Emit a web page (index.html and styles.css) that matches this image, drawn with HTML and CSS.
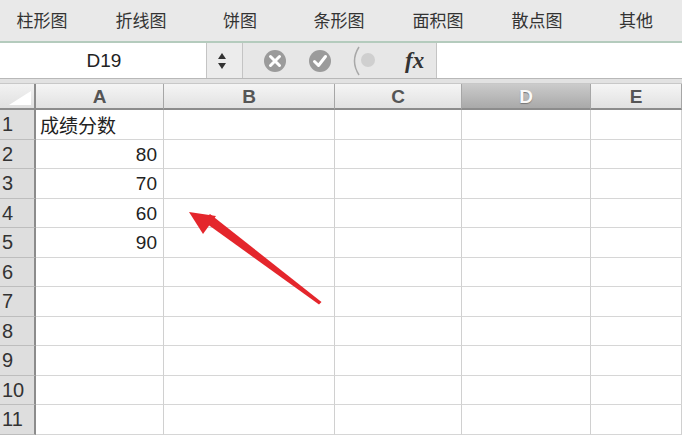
FILE: index.html
```html
<!DOCTYPE html>
<html>
<head>
    <title>成绩分数</title>
    <link rel="stylesheet" href="styles.css">
</head>
<body>
    <div class="ribbon">
        <span class="ribbon-item">柱形图</span>
        <span class="ribbon-item">折线图</span>
        <span class="ribbon-item">饼图</span>
        <span class="ribbon-item">条形图</span>
        <span class="ribbon-item">面积图</span>
        <span class="ribbon-item">散点图</span>
        <span class="ribbon-item">其他</span>
    </div>

    <div class="formula-bar">
        <div class="name-box">D19</div>
        <div class="spinner">
            <svg width="10" height="18" viewBox="0 0 10 18">
                <path d="M5 1 L9 7 L1 7 Z" fill="#333"/>
                <path d="M5 17 L9 11 L1 11 Z" fill="#333"/>
            </svg>
        </div>
        <div class="tools">
            <svg class="tool-icon" width="24" height="24" viewBox="0 0 24 24">
                <circle cx="12" cy="12" r="11" fill="#9b9b9b"/>
                <path d="M7.5 7.5 L16.5 16.5 M16.5 7.5 L7.5 16.5" stroke="#fff" stroke-width="3" stroke-linecap="round"/>
            </svg>
            <svg class="tool-icon" width="24" height="24" viewBox="0 0 24 24">
                <circle cx="12" cy="12" r="11" fill="#9b9b9b"/>
                <path d="M6.5 12.5 L10.5 16.5 L17.5 7.5" stroke="#fff" stroke-width="3" fill="none" stroke-linecap="round" stroke-linejoin="round"/>
            </svg>
            <svg class="paren" width="30" height="34" viewBox="0 0 30 34">
                <path d="M10 3 Q1 17 10 31" stroke="#a8a8a8" stroke-width="1.5" fill="none"/>
                <circle cx="19" cy="16" r="7" fill="#cfcfcf"/>
            </svg>
            <span class="fx">fx</span>
        </div>
        <div class="formula-input"></div>
    </div>

    <div class="band"></div>

    <div class="sheet">
        <div class="grid">
            <div class="corner"></div>
            <div class="col-head">A</div>
            <div class="col-head">B</div>
            <div class="col-head">C</div>
            <div class="col-head selected">D</div>
            <div class="col-head">E</div>

            <div class="row-head">1</div>
            <div class="cell text">成绩分数</div><div class="cell"></div><div class="cell"></div><div class="cell"></div><div class="cell"></div>
            <div class="row-head">2</div>
            <div class="cell num">80</div><div class="cell"></div><div class="cell"></div><div class="cell"></div><div class="cell"></div>
            <div class="row-head">3</div>
            <div class="cell num">70</div><div class="cell"></div><div class="cell"></div><div class="cell"></div><div class="cell"></div>
            <div class="row-head">4</div>
            <div class="cell num">60</div><div class="cell"></div><div class="cell"></div><div class="cell"></div><div class="cell"></div>
            <div class="row-head">5</div>
            <div class="cell num">90</div><div class="cell"></div><div class="cell"></div><div class="cell"></div><div class="cell"></div>
            <div class="row-head">6</div>
            <div class="cell"></div><div class="cell"></div><div class="cell"></div><div class="cell"></div><div class="cell"></div>
            <div class="row-head">7</div>
            <div class="cell"></div><div class="cell"></div><div class="cell"></div><div class="cell"></div><div class="cell"></div>
            <div class="row-head">8</div>
            <div class="cell"></div><div class="cell"></div><div class="cell"></div><div class="cell"></div><div class="cell"></div>
            <div class="row-head">9</div>
            <div class="cell"></div><div class="cell"></div><div class="cell"></div><div class="cell"></div><div class="cell"></div>
            <div class="row-head">10</div>
            <div class="cell"></div><div class="cell"></div><div class="cell"></div><div class="cell"></div><div class="cell"></div>
            <div class="row-head">11</div>
            <div class="cell"></div><div class="cell"></div><div class="cell"></div><div class="cell"></div><div class="cell"></div>
        </div>

        <!-- annotation arrow drawn over the sheet -->
        <svg class="arrow" width="682" height="354" viewBox="0 0 682 354">
            <path d="M321.5 218 L210 130 L203 137 L319 220.5 Z" fill="#e4262c"/>
            <path d="M189 128 L216 132 L203 150 Z" fill="#e4262c"/>
        </svg>
    </div>
</body>
</html>
```

FILE: styles.css
```css
body {
    margin: 0;
    width: 682px;
    height: 437px;
    overflow: hidden;
    background: #fff;
    font-family: "Liberation Sans", Arial, "Noto Sans CJK SC", sans-serif;
}
.ribbon {
    height: 43px;
    display: flex;
    align-items: center;
    gap: 39px;
    padding-left: 12px;
    background: #e9e9e9;
    border-bottom: 2px solid #b4cbbd;
    box-sizing: border-box;
}
.ribbon-item {
    width: 60px;
    text-align: center;
    font-family: "Noto Sans CJK SC", sans-serif;
    font-size: 17px;
    color: #333;
    padding-bottom: 2px;
}
.formula-bar {
    height: 36px;
    display: flex;
    border-bottom: 1px solid #b8b8b8;
    box-sizing: border-box;
}
.name-box {
    width: 207px;
    background: #fff;
    border-right: 1px solid #c4c4c4;
    box-sizing: border-box;
    text-align: center;
    line-height: 35px;
    font-size: 19px;
    color: #222;
    padding-left: 2px;
}
.spinner {
    width: 36px;
    background: #ececec;
    border-right: 1px solid #c4c4c4;
    box-sizing: border-box;
    display: flex;
    align-items: center;
    justify-content: center;
    padding-right: 6px;
}
.tools {
    width: 194px;
    background: #e7e7e7;
    border-right: 1px solid #c4c4c4;
    box-sizing: border-box;
    display: flex;
    align-items: center;
    padding-left: 20px;
}
.tool-icon {
    margin-right: 21px;
}
.paren {
    margin-left: -4px;
}
.fx {
    margin-left: 26px;
    font-family: "Liberation Serif", serif;
    font-style: italic;
    font-weight: bold;
    font-size: 23px;
    color: #333;
}
.formula-input {
    flex: 1;
    background: #fff;
}
.band {
    height: 4px;
    background: #e2e2e2;
    border-bottom: 1px solid #c8c8c8;
}
.sheet {
    position: relative;
}
.grid {
    display: grid;
    grid-template-columns: 36px 128px 171px 127px 129px 91px;
    grid-template-rows: 26px repeat(11, 29.5px);
}
.corner {
    background: linear-gradient(#f2f2f2, #e0e0e0);
    border-right: 2px solid #8c8c8c;
    border-bottom: 2px solid #8c8c8c;
    box-sizing: border-box;
    position: relative;
}
.corner::after {
    content: "";
    position: absolute;
    right: 3px;
    bottom: 3px;
    border-left: 22px solid transparent;
    border-bottom: 14px solid #fff;
}
.col-head {
    background: linear-gradient(#f5f5f5, #e1e1e1);
    border-right: 1px solid #a6a6a6;
    border-bottom: 2px solid #8c8c8c;
    box-sizing: border-box;
    text-align: center;
    font-size: 19px;
    font-weight: bold;
    line-height: 25px;
    color: #555;
}
.col-head.selected {
    background: linear-gradient(#cbcbcb, #a9a9a9);
    color: #fafafa;
    text-shadow: 0 1px 1px #777;
}
.row-head {
    background: #dedede;
    border-right: 2px solid #8c8c8c;
    border-bottom: 1px solid #bdbdbd;
    box-sizing: border-box;
    font-size: 20px;
    color: #333;
    line-height: 29px;
    padding-left: 2px;
}
.cell {
    border-right: 1px solid #d0d0d0;
    border-bottom: 1px solid #d6d6d6;
    box-sizing: border-box;
    font-size: 19px;
    line-height: 29px;
    color: #222;
}
.cell.text {
    font-family: "Noto Sans CJK SC", sans-serif;
    padding-left: 4px;
}
.cell.num {
    text-align: right;
    padding-right: 6px;
}
.arrow {
    position: absolute;
    left: 0;
    top: 0;
    pointer-events: none;
}
```
